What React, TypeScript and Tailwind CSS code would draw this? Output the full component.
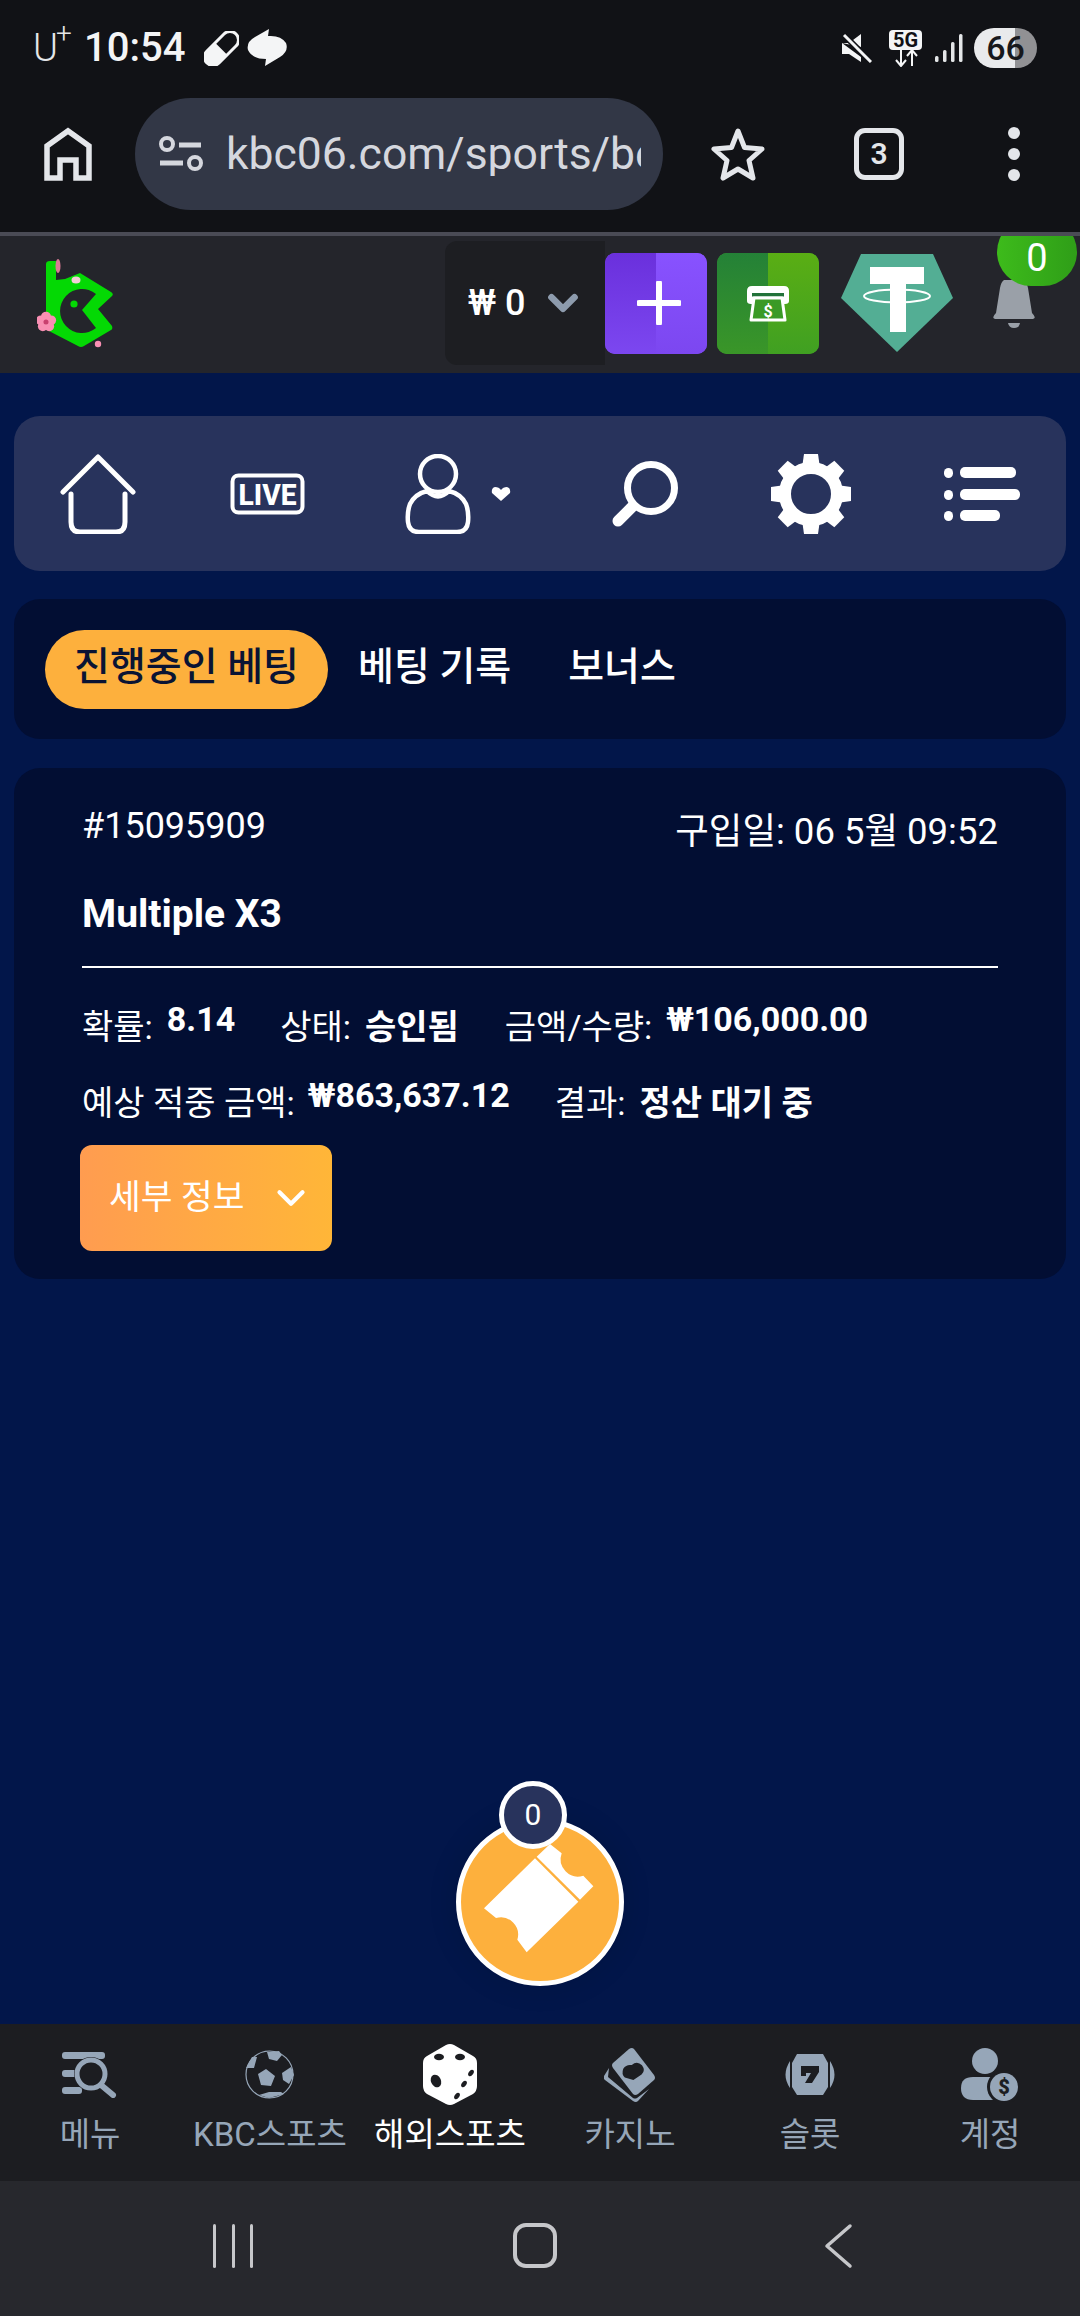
import React from 'react';
import { ChevronDown } from 'lucide-react';

const KR = "font-['Roboto','Noto_Sans_CJK_KR',sans-serif]";

function Blossom({ cx, cy, r }: { cx: number; cy: number; r: number }) {
  const petals = [0, 72, 144, 216, 288];
  return (
    <g>
      {petals.map((a) => (
        <circle key={a} cx={cx + Math.sin((a * Math.PI) / 180) * r * 0.6} cy={cy - Math.cos((a * Math.PI) / 180) * r * 0.6} r={r * 0.55} fill="#f98fb3" />
      ))}
      <circle cx={cx} cy={cy} r={r * 0.28} fill="#c9406f" />
    </g>
  );
}

function Logo() {
  return (
    <svg viewBox="37 258 80 94" width="80" height="94" className="mt-[3px]">
      <path d="M50 261h6v19l9-1 15-6 31 19q3 2 1 4l-14 13 14 17q1 3-1 4l-27 16q-3 2-6 0l-29-15q-3-1-3-4V264q0-3 4-3z" fill="#04d904" />
      <path d="M82 310L96 294A22 22 0 1 0 96 328Z" fill="#24252b" />
      <circle cx="74" cy="304" r="3.6" fill="#04d904" />
      <Blossom cx={46} cy={322} r={9} />
      <ellipse cx="76" cy="280" rx="4.5" ry="3.5" fill="#f3cfd6" />
      <circle cx="98" cy="344" r="3.2" fill="#f98fb3" />
      <ellipse cx="58" cy="266" rx="2.5" ry="7" fill="#d97a94" />
    </svg>
  );
}

function Tether() {
  return (
    <svg viewBox="0 0 112 100" width="112" height="100">
      <path d="M20 1H92L112 45 56 99 0 45Z" fill="#53ae94" />
      <path d="M29 14H83V31H65V79H49V31H29Z" fill="#fff" />
      <ellipse cx="56" cy="43" rx="33" ry="6.5" fill="none" stroke="#fff" strokeWidth="2" />
    </svg>
  );
}

function Atm() {
  return (
    <svg viewBox="0 0 42 36" width="42" height="36">
      <path d="M5 0H37Q42 0 42 5V15Q42 18 38 18H4Q0 18 0 15V5Q0 0 5 0Z" fill="#fff" />
      <rect x="5" y="7" width="32" height="3.5" fill="#22723a" />
      <path d="M7 12H35L38 34H4Z" fill="#3a9a26" stroke="#fff" strokeWidth="3" strokeLinejoin="round" />
      <text x="21" y="31" textAnchor="middle" fontSize="16" fontWeight="700" fill="#fff" fontFamily="Roboto">$</text>
    </svg>
  );
}

function Bell() {
  return (
    <svg viewBox="0 0 46 50" width="46" height="50">
      <path d="M13 0H32Q36 2 37 8L41 33Q46 38 42 39H4Q0 38 5 33L9 8Q10 2 13 0Z" fill="#9aa0a8" />
      <path d="M17 43H29Q28 48 23 48 18 48 17 43Z" fill="#9aa0a8" />
    </svg>
  );
}

function MenuIcon() {
  return (
    <svg viewBox="0 0 56 46" width="56" height="46" fill="#96a6b8">
      <rect x="0" y="0" width="43" height="7" rx="3" />
      <rect x="0" y="18" width="16" height="7" rx="3" />
      <rect x="0" y="35" width="20" height="7" rx="3" />
      <circle cx="29" cy="22" r="17" fill="#1c1d21" />
      <circle cx="29" cy="22" r="14" fill="none" stroke="#96a6b8" strokeWidth="5" />
      <path d="M39 33L51 43" stroke="#96a6b8" strokeWidth="6" strokeLinecap="round" />
    </svg>
  );
}

function BallIcon() {
  return (
    <svg viewBox="0 0 50 50" width="50" height="50" fill="#96a6b8">
      <circle cx="24.5" cy="24.5" r="23.5" fill="none" stroke="#96a6b8" strokeWidth="1.2" />
      <path d="M21 19L30 26 26 36 16 35 13 24Z" />
      <path d="M22 2L34 1 37 5 32 11 24 9Z" />
      <path d="M46 17L49 25 44 34 38 30 37 23Z" />
      <path d="M14 45L24 42 36 42 39 44 24 48Z" />
      <path d="M7 7L12 7 9 18 1 18Z" />
    </svg>
  );
}

function DiceIcon() {
  return (
    <svg viewBox="0 0 54 62" width="54" height="62">
      <path d="M23 1Q27-1 31 1L50 12Q54 14 54 19V42Q54 47 50 50L31 60Q27 62 23 60L4 50Q0 47 0 42V19Q0 14 4 12Z" fill="#fff" />
      <g fill="#1c1d21">
        <ellipse cx="16" cy="13" rx="5" ry="3.2" />
        <ellipse cx="37" cy="13" rx="5" ry="3.2" />
        <ellipse cx="13" cy="37" rx="5" ry="6.5" transform="rotate(-25 13 37)" />
        <ellipse cx="41" cy="40" rx="2.3" ry="3.6" transform="rotate(35 41 40)" />
        <ellipse cx="48" cy="29" rx="2.3" ry="3.6" transform="rotate(35 48 29)" />
        <ellipse cx="34" cy="52" rx="2.3" ry="3.6" transform="rotate(35 34 52)" />
      </g>
    </svg>
  );
}

function CasinoIcon() {
  return (
    <svg viewBox="0 0 52 56" width="52" height="56" fill="#96a6b8">
      <path d="M25 2Q28 0 30 2L50 28Q52 31 50 33L34 47Q31 49 29 47L9 21Q7 18 9 16Z" />
      <path d="M5 21L0 29Q-1 31 1 33L29 54Q32 56 34 54L45 42 33 51Q31 52 29 51L4 30Z" />
      <path d="M29 18Q35 14 39 20 42 26 37 29L28 33 20 29Q17 25 20 20 24 16 29 18Z" fill="#1c1d21" transform="rotate(-10 29 25)" />
    </svg>
  );
}

function SlotIcon() {
  return (
    <svg viewBox="0 0 52 42" width="52" height="42" fill="#96a6b8">
      <path d="M13 0H39L44 9V33L39 41H13L8 33V9Z" />
      <path d="M6 7V34Q-3 21 6 7ZM46 7V34Q55 21 46 7Z" />
      <path d="M17 12H35V18L28 29H21L27 19H22V22H17Z" fill="#1c1d21" />
    </svg>
  );
}

function AccountIcon() {
  return (
    <svg viewBox="0 0 58 54" width="58" height="54" fill="#96a6b8">
      <circle cx="24" cy="13" r="13" />
      <path d="M12 29H30Q40 29 40 40 40 52 30 52H12Q0 52 0 40 0 29 12 29Z" />
      <circle cx="43" cy="39" r="17" fill="#1c1d21" />
      <circle cx="43" cy="39" r="14" />
      <text x="43" y="46" textAnchor="middle" fontSize="20" fontWeight="900" fill="#1c1d21" fontFamily="Roboto">$</text>
    </svg>
  );
}

function Ticket() {
  return (
    <svg viewBox="180 250 360 360" width="120" height="120" fill="#fff">
      <path d="M345 308L475 438 320 590 292 552A52 52 0 0 0 228 487L192 458Z" />
      <path d="M350 303L390 265 425 293A52 52 0 0 0 490 360L520 392 480 432Z" />
    </svg>
  );
}

function Gear() {
  const teeth = [0, 45, 90, 135, 180, 225, 270, 315];
  return (
    <svg viewBox="0 0 80 80" width="80" height="80" fill="#fff">
      <circle cx="40" cy="40" r="26" fill="none" stroke="#fff" strokeWidth="12" />
      {teeth.map((a) => (
        <path key={a} d="M33 0H47L49 14H31Z" transform={`rotate(${a} 40 40)`} />
      ))}
    </svg>
  );
}

const tabs = ['베팅 기록', '보너스'];

const bottomItems = [
  { label: '메뉴', icon: <MenuIcon /> },
  { label: 'KBC스포츠', icon: <BallIcon /> },
  { label: '해외스포츠', icon: <DiceIcon />, active: true },
  { label: '카지노', icon: <CasinoIcon /> },
  { label: '슬롯', icon: <SlotIcon /> },
  { label: '계정', icon: <AccountIcon /> },
];

export default function App() {
  return (
    <div className={`${KR} relative flex h-[2316px] w-[1080px] flex-col overflow-hidden bg-[#02164a] text-white`}>
      {/* status bar */}
      <div className="flex h-[96px] shrink-0 items-center bg-[#111216] pl-[33px] pr-[43px]">
        <span className="relative w-[41px] text-[38px] font-light leading-none text-[#e4e6e8]">
          U<span className="absolute left-[23px] top-[-9px] text-[28px]">+</span>
        </span>
        <span className="ml-[10px] text-[40px] font-medium leading-none text-[#f4f5f6]">10:54</span>
        <svg viewBox="0 0 35 35" width="35" height="35" className="ml-[19px]">
          <g transform="rotate(-45 17.5 17.5)">
            <rect x="-3" y="9" width="41" height="17" rx="8.5" fill="none" stroke="#f4f5f6" strokeWidth="3" />
            <path d="M17 9H5.5A8.500 8.500 0 0 0 5.500 26H17Z" fill="#f4f5f6" />
          </g>
        </svg>
        <svg viewBox="0 0 40 38" width="40" height="38" className="ml-[8px]">
          <path d="M22 0L21 7Q34 6 39 14 42 22 33 28L18 37 19 30Q5 30 1 21-1 13 8 8Z" fill="#f4f5f6" />
        </svg>
        <div className="ml-auto flex items-center">
          <svg viewBox="0 0 30 30" width="30" height="30">
            <path d="M0 10H7L19 1V14ZM0 10V21H7L19 29V24Z" fill="#f4f5f6" />
            <path d="M2 2L29 29" stroke="#111216" strokeWidth="6" />
            <path d="M2 2L29 29" stroke="#f4f5f6" strokeWidth="3" />
          </svg>
          <div className="ml-[17px] flex w-[33px] flex-col items-center">
            <span className="flex h-[20px] w-[33px] items-center justify-center rounded-[4px] bg-[#f4f5f6] text-[20px] font-bold leading-none text-[#111216]">5G</span>
            <svg viewBox="0 0 26 17" width="26" height="17">
              <path d="M8 0V15M3 10L8 16 13 10M19 16V1M14 6L19 0 24 6" stroke="#f4f5f6" strokeWidth="2" fill="none" />
            </svg>
          </div>
          <svg viewBox="0 0 28 28" width="28" height="28" className="ml-[13px]" fill="#e4e6e8">
            <rect x="0" y="22" width="3.500" height="6" rx="1.500" />
            <rect x="8" y="16" width="3.500" height="12" rx="1.500" />
            <rect x="16" y="8" width="3.500" height="20" rx="1.500" />
            <rect x="24" y="0" width="3.500" height="28" rx="1.500" />
          </svg>
          <div className="ml-[11px] flex h-[40px] w-[63px] items-center justify-center rounded-full bg-[linear-gradient(90deg,#e9eaec_0,#e9eaec_65%,#919194_65%,#919194_100%)] text-[34px] font-medium leading-none text-[#17181c]">66</div>
        </div>
      </div>

      {/* browser toolbar */}
      <div className="flex h-[136px] shrink-0 items-center bg-[#111216] pb-[20px]">
        <svg viewBox="0 0 48 54" width="48" height="54" fill="none" stroke="#e4e6ea" strokeWidth="5.500" className="ml-[44px]">
          <path d="M3 51V19L24 4 45 19V51H32V33H16V51Z" />
        </svg>
        <div className="ml-[43px] flex h-[112px] w-[528px] items-center rounded-full bg-[#323746] pl-[24px] pr-[22px]">
          <svg viewBox="0 0 44 36" width="44" height="36" fill="none" stroke="#d5d7de" strokeWidth="4" className="shrink-0">
            <circle cx="8" cy="8" r="6" />
            <path d="M20 9H42M1 27H24" strokeWidth="5" />
            <circle cx="36" cy="27" r="6" />
          </svg>
          <div className="ml-[23px] overflow-hidden whitespace-nowrap text-[44.500px] leading-none text-[#d5d7de]">kbc06.com/sports/bet</div>
        </div>
        <svg viewBox="0 0 56 56" width="56" height="56" fill="none" stroke="#e4e6ea" strokeWidth="5" className="ml-[47px]">
          <path d="M28 5L34.500 21.500 52 23 39 34.500 43 52 28 43 13 52 17 34.500 4 23 21.500 21.500Z" strokeLinejoin="round" />
        </svg>
        <div className="ml-[88px] flex h-[52px] w-[50px] items-center justify-center rounded-[11px] border-[5px] border-[#e4e6ea] text-[30px] font-semibold leading-none text-[#e4e6ea]">3</div>
        <div className="ml-[104px] flex flex-col gap-[9px]">
          <span className="h-[12px] w-[12px] rounded-full bg-[#e4e6ea]" />
          <span className="h-[12px] w-[12px] rounded-full bg-[#e4e6ea]" />
          <span className="h-[12px] w-[12px] rounded-full bg-[#e4e6ea]" />
        </div>
      </div>
      <div className="h-[4px] shrink-0 bg-[#4a4b55]" />

      {/* site header */}
      <div className="relative flex h-[137px] shrink-0 items-center overflow-hidden bg-[#24252b] pb-[3px] pl-[37px]">
        <Logo />
        <div className="ml-[328px] flex h-[124px] w-[160px] items-center rounded-l-[12px] bg-[#1d1e22] pl-[23px]">
          <span className="whitespace-nowrap text-[36px] font-medium leading-none">₩ 0</span>
          <ChevronDown className="ml-[15px] text-[#8d9bad]" size={46} strokeWidth={3.500} />
        </div>
        <button className="relative flex h-[101px] w-[102px] items-center justify-center overflow-hidden rounded-[10px] bg-[#7c47f0]">
          <span className="absolute bottom-0 left-0 top-0 w-[51px] bg-[linear-gradient(180deg,#6a30dc,#7c47f0)]" />
          <span className="absolute bottom-0 right-0 top-0 w-[51px] bg-[linear-gradient(180deg,#8852ff,#7c47f0)]" />
          <svg viewBox="0 0 44 44" width="44" height="44" className="relative ml-[5px]">
            <path d="M22 2V42M2 22H42" stroke="#fff" strokeWidth="6" strokeLinecap="round" />
          </svg>
        </button>
        <button className="relative ml-[10px] flex h-[101px] w-[102px] items-center justify-center overflow-hidden rounded-[10px] bg-[#3a9a26]">
          <span className="absolute bottom-0 left-0 top-0 w-[51px] bg-[linear-gradient(180deg,#248137,#3a9628)]" />
          <span className="absolute bottom-0 right-0 top-0 w-[51px] bg-[linear-gradient(180deg,#5aae14,#40a022)]" />
          <span className="relative mt-[2px]"><Atm /></span>
        </button>
        <div className="ml-[22px]">
          <Tether />
        </div>
        <div className="ml-[38px] mt-[4px]">
          <Bell />
        </div>
        {/* notification count */}
        <span className="absolute right-[3px] top-[-18px] flex h-[68px] w-[80px] items-end justify-center rounded-full bg-[linear-gradient(90deg,#3dbb1b,#2f9e18)] pb-[9px] text-[38px] leading-none text-white">0</span>
      </div>

      {/* page */}
      <main className="relative flex min-h-0 flex-1 flex-col gap-[28px] px-[14px] pt-[43px]">
        <div className="flex h-[155px] items-center rounded-[26px] bg-[#28335c] px-[46px]">
          <svg viewBox="0 0 76 80" width="76" height="80" fill="none" stroke="#fff" strokeWidth="5" strokeLinecap="round" strokeLinejoin="round">
            <path d="M3 38L38 3 73 38M11 40V68Q11 78 20 78H56Q65 78 65 68V40" />
          </svg>
          <svg viewBox="0 0 75 42" width="75" height="42" className="ml-[94px]">
            <rect x="2.500" y="2.500" width="70" height="37" rx="6" fill="none" stroke="#fff" strokeWidth="4" />
            <text x="37.500" y="32" textAnchor="middle" fontSize="29" fontWeight="800" fill="#fff" fontFamily="Roboto" textLength="58" lengthAdjust="spacingAndGlyphs">LIVE</text>
          </svg>
          <svg viewBox="0 0 66 80" width="66" height="80" fill="none" stroke="#fff" strokeWidth="4.500" strokeLinejoin="round" className="ml-[100px]">
            <ellipse cx="33" cy="20" rx="18" ry="18" />
            <path d="M22 37Q10 40 5 50 2 58 3 68 4 78 14 78H52Q62 78 63 68 64 58 61 50 56 40 44 37 33 48 22 37Z" />
          </svg>
          <svg viewBox="0 0 20 14" width="20" height="14" fill="#fff" className="ml-[20px]">
            <path d="M10 14L1 6Q0 1 4 0 8 0 10 3 12 0 16 0 20 1 19 6Z" />
          </svg>
          <svg viewBox="0 0 68 68" width="68" height="68" fill="none" stroke="#fff" className="ml-[100px]">
            <circle cx="40" cy="28" r="23.500" strokeWidth="7" />
            <path d="M21 47L7 61" strokeWidth="11" strokeLinecap="round" />
          </svg>
          <span className="ml-[92px]"><Gear /></span>
          <svg viewBox="0 0 76 54" width="76" height="54" fill="#fff" className="ml-[93px]">
            <rect x="0" y="1" width="9" height="10" rx="4.500" />
            <rect x="16" y="0" width="56" height="11" rx="5" />
            <rect x="0" y="23" width="9" height="10" rx="4.500" />
            <rect x="16" y="22" width="60" height="11" rx="5" />
            <rect x="0" y="44" width="9" height="10" rx="4.500" />
            <rect x="16" y="43" width="40" height="11" rx="5" />
          </svg>
        </div>

        <div className="flex h-[140px] items-center rounded-[26px] bg-[#020e33] pl-[31px]">
          <div className="flex h-[79px] w-[283px] items-center justify-center rounded-full bg-[#fdb03d] pb-[3px] text-[39px] font-medium text-[#0a1434]">진행중인 베팅</div>
          <span className="mb-[3px] ml-[30px] text-[39px] font-medium">{tabs[0]}</span>
          <span className="mb-[3px] ml-[57px] text-[39px] font-medium">{tabs[1]}</span>
        </div>

        <div className="mt-[1px] flex h-[511px] flex-col rounded-[26px] bg-[#020e33] px-[68px] pt-[32px]">
          <div className="flex items-start justify-between">
            <span className="text-[36px] leading-[52px]">#15095909</span>
            <span className="mt-[6px] text-[36.500px] leading-[52px]">구입일: 06 5월 09:52</span>
          </div>
          <div className="mt-[30px] text-[39px] font-bold leading-[52px]">Multiple X3</div>
          <div className="mt-[26px] h-[2px] bg-white" />
          <div className="mt-[32px] flex items-start text-[34px] leading-[50px]">
            <span className="mt-[2px]">확률:</span>
            <b className="ml-[14px] mt-[-6px] font-bold">8.14</b>
            <span className="ml-[45px] mt-[2px]">상태:</span>
            <b className="ml-[14px] mt-[2px] font-bold">승인됨</b>
            <span className="ml-[46px] mt-[2px]">금액/수량:</span>
            <b className="ml-[14px] mt-[-6px] font-bold">₩106,000.00</b>
          </div>
          <div className="mt-[24px] flex items-start text-[34px] leading-[50px]">
            <span className="mt-[2px]">예상 적중 금액:</span>
            <b className="ml-[13px] mt-[-6px] font-bold">₩863,637.12</b>
            <span className="ml-[45px] mt-[2px]">결과:</span>
            <b className="ml-[14px] mt-[2px] font-bold">정산 대기 중</b>
          </div>
          <button className="-ml-[2px] mt-[17px] flex h-[106px] w-[252px] items-center rounded-[12px] bg-[linear-gradient(90deg,#ff9c50,#ffb638)] pl-[29px] text-[34.500px]">
            세부 정보
            <ChevronDown className="ml-[23px]" size={46} strokeWidth={2.200} />
          </button>
        </div>

        {/* betslip button */}
        <div className="absolute bottom-[38px] left-[456px] flex h-[168px] w-[168px] items-center justify-center rounded-full border-[5px] border-white bg-[#fdb03d] shadow-[0_0_30px_rgba(0,0,0,0.12)]">
          <span className="mt-[-6px]"><Ticket /></span>
          <span className="absolute left-[38px] top-[-42px] flex h-[68px] w-[68px] items-center justify-center rounded-full border-[5px] border-white bg-[#28335c] text-[30px] leading-none">0</span>
        </div>
      </main>

      {/* bottom nav */}
      <nav className="grid h-[157px] shrink-0 grid-cols-6 bg-[#1c1d21]">
        {bottomItems.map((item) => (
          <div key={item.label} className="flex flex-col items-center">
            <div className="flex h-[89px] items-center justify-center pt-[12px]">{item.icon}</div>
            <span className={`whitespace-nowrap text-[33px] leading-[44px] ${item.active ? 'text-white' : 'text-[#96a6b8]'}`}>{item.label}</span>
          </div>
        ))}
      </nav>

      {/* android nav */}
      <div className="relative flex h-[135px] shrink-0 items-center bg-[#27282d] pb-[6px]">
        <div className="ml-[213px] flex w-[40px] justify-between">
          <span className="h-[44px] w-[3px] rounded bg-[#c6c7ca]" />
          <span className="h-[44px] w-[3px] rounded bg-[#c6c7ca]" />
          <span className="h-[44px] w-[3px] rounded bg-[#c6c7ca]" />
        </div>
        <span className="ml-[260px] h-[45px] w-[44px] rounded-[13px] border-[4px] border-[#c6c7ca]" />
        <svg viewBox="0 0 30 46" width="30" height="46" fill="none" stroke="#c6c7ca" strokeWidth="3.500" strokeLinecap="round" strokeLinejoin="round" className="ml-[266px]">
          <path d="M27 3L4 23 27 43" />
        </svg>
      </div>
    </div>
  );
}
